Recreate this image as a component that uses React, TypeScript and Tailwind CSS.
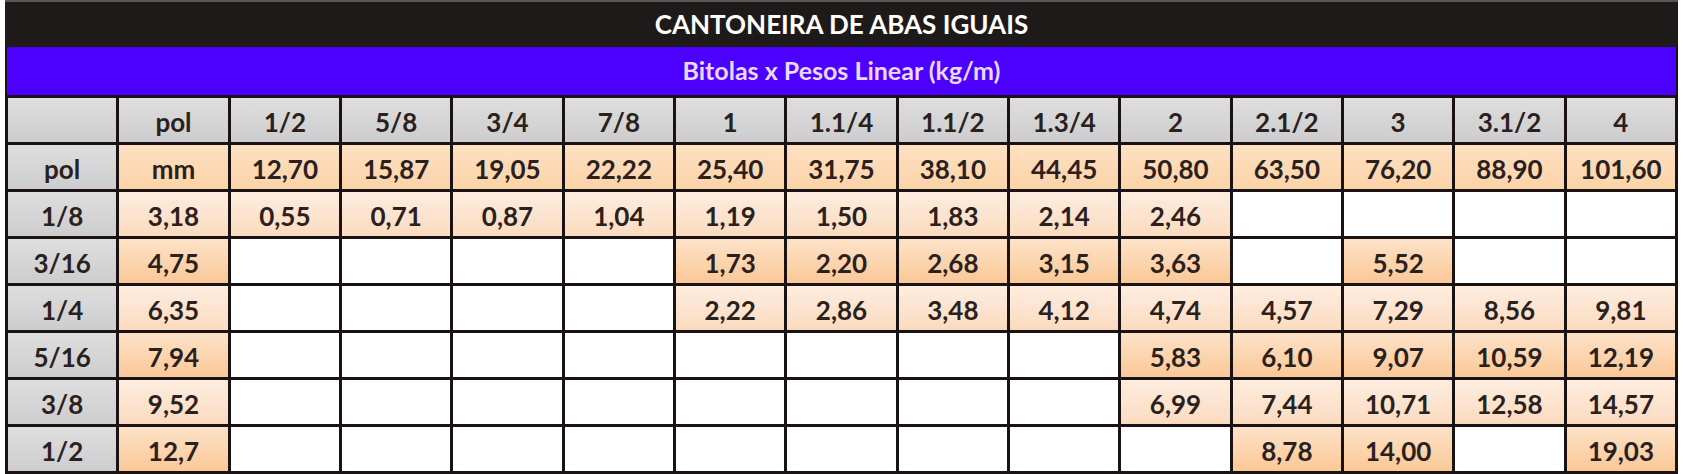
import React from 'react';

type Tone = 'gray' | 'mm' | 'light' | 'dark';

const headers = ['', 'pol', '1/2', '5/8', '3/4', '7/8', '1', '1.1/4', '1.1/2', '1.3/4', '2', '2.1/2', '3', '3.1/2', '4'];
const mmRow = ['mm', '12,70', '15,87', '19,05', '22,22', '25,40', '31,75', '38,10', '44,45', '50,80', '63,50', '76,20', '88,90', '101,60'];

const rows: { label: string; tone: Tone; values: string[] }[] = [
  { label: '1/8', tone: 'light', values: ['3,18', '0,55', '0,71', '0,87', '1,04', '1,19', '1,50', '1,83', '2,14', '2,46', '', '', '', ''] },
  { label: '3/16', tone: 'dark', values: ['4,75', '', '', '', '', '1,73', '2,20', '2,68', '3,15', '3,63', '', '5,52', '', ''] },
  { label: '1/4', tone: 'light', values: ['6,35', '', '', '', '', '2,22', '2,86', '3,48', '4,12', '4,74', '4,57', '7,29', '8,56', '9,81'] },
  { label: '5/16', tone: 'dark', values: ['7,94', '', '', '', '', '', '', '', '', '5,83', '6,10', '9,07', '10,59', '12,19'] },
  { label: '3/8', tone: 'light', values: ['9,52', '', '', '', '', '', '', '', '', '6,99', '7,44', '10,71', '12,58', '14,57'] },
  { label: '1/2', tone: 'dark', values: ['12,7', '', '', '', '', '', '', '', '', '', '8,78', '14,00', '', '19,03'] },
];

const toneClass: Record<Tone, string> = {
  gray: 'bg-linear-to-b from-[#dededf] to-[#cdcdcf]',
  mm: 'bg-linear-to-b from-[#fde0c2] to-[#fcd3a8]',
  light: 'bg-linear-to-b from-[#fdede0] to-[#fbdbbf]',
  dark: 'bg-linear-to-b from-[#fde2c8] to-[#fac897]',
};

const Cell: React.FC<{ text: string; tone: Tone }> = ({ text, tone }) => (
  <div
    className={`h-[44px] pt-[3px] flex items-center justify-center text-[26px] leading-none font-bold text-[#2b211c] ${
      text === '' && tone !== 'gray' ? 'bg-white' : toneClass[tone]
    }`}
  >
    {text}
  </div>
);

const App: React.FC = () => {
  return (
    <div className="w-[1685px] h-[474px] overflow-hidden bg-white" style={{ fontFamily: 'Lato, "Noto Sans", sans-serif' }}>
      <div className="ml-[5px] w-[1673px] bg-[#1b1313]">
        <div className="h-[47px] bg-[#1f1a1a] border-t-2 border-[#5a5656] flex items-center justify-center text-[26px] font-bold text-white">
          CANTONEIRA DE ABAS IGUAIS
        </div>
        <div className="h-[48px] mx-[2px] bg-[#4c00fe] flex items-center justify-center text-[25px] font-bold text-[#e9d9ff]">
          Bitolas x Pesos Linear (kg/m)
        </div>
        <div className="grid grid-cols-15 gap-[3px] p-[3px]">
          {headers.map((h, i) => (
            <Cell key={`h${i}`} text={h} tone="gray" />
          ))}
          <Cell text="pol" tone="gray" />
          {mmRow.map((v, i) => (
            <Cell key={`m${i}`} text={v} tone="mm" />
          ))}
          {rows.map((r) => (
            <React.Fragment key={r.label}>
              <Cell text={r.label} tone="gray" />
              {r.values.map((v, i) => (
                <Cell key={`${r.label}-${i}`} text={v} tone={r.tone} />
              ))}
            </React.Fragment>
          ))}
        </div>
      </div>
    </div>
  );
};

export default App;
